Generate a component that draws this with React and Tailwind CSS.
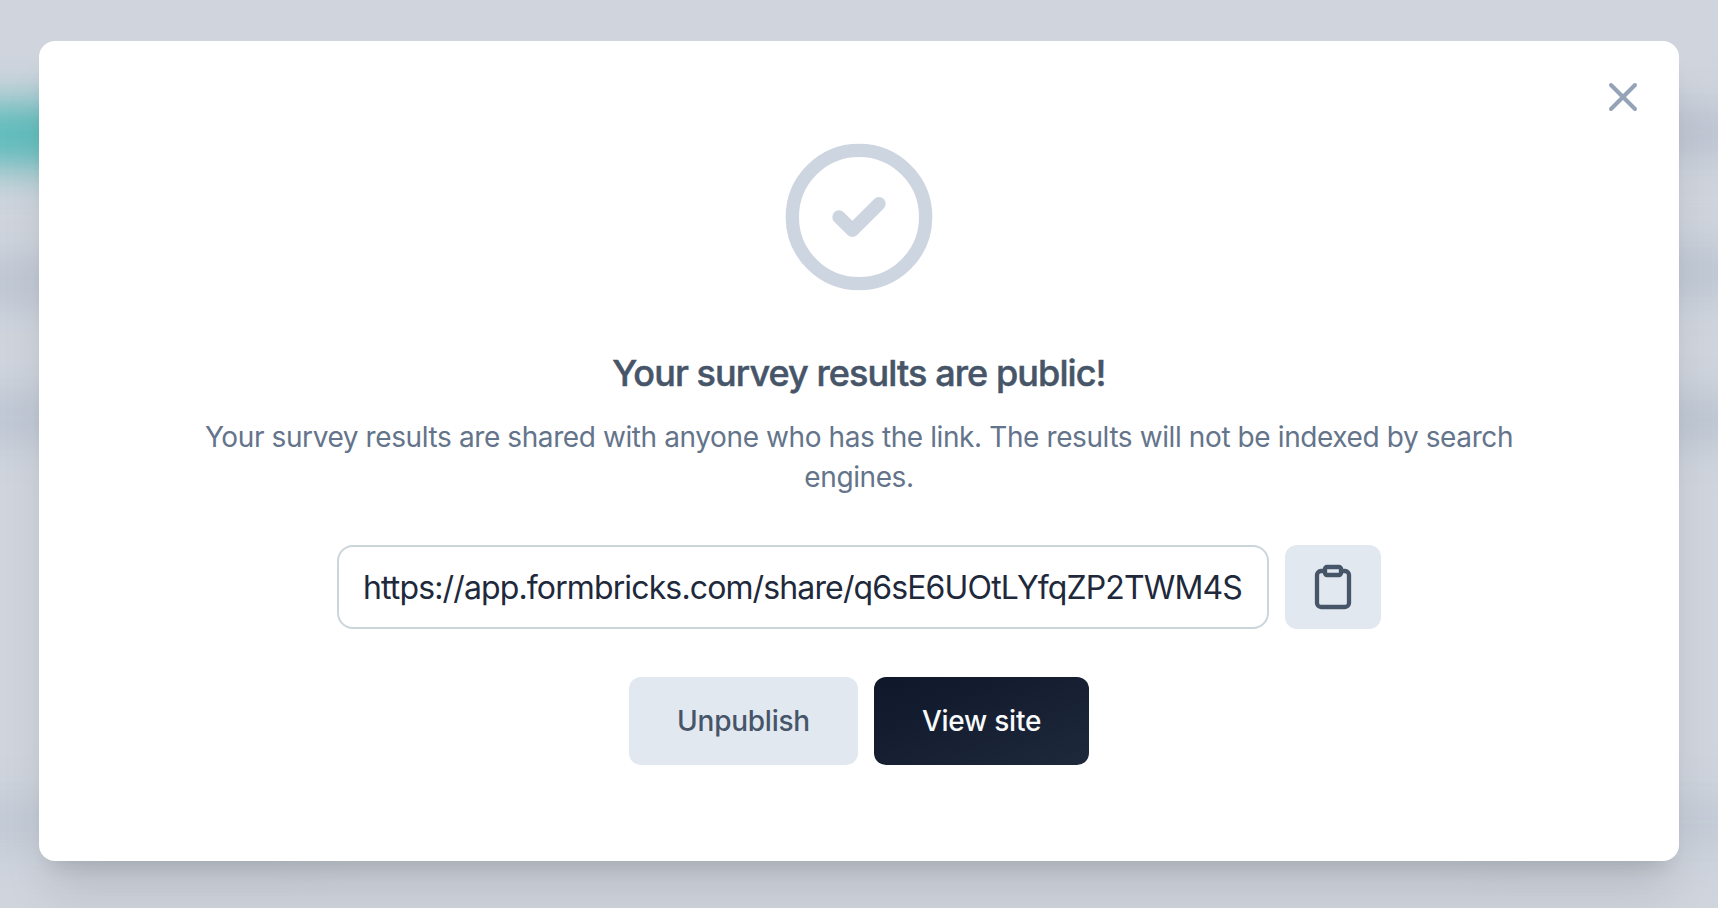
import { CircleCheck, Clipboard, X } from "lucide-react";

function Backdrop() {
  return (
    <div className="absolute inset-0 bg-[#cfd4dd]">
      <div className="absolute -left-20 top-[104px] h-[62px] w-[300px] bg-[#58bab9] blur-[20px]" />
      <div className="absolute -left-20 top-[262px] h-[40px] w-[220px] bg-[#bac3d0] blur-[20px]" />
      <div className="absolute -left-20 top-[396px] h-[44px] w-[220px] bg-[#bac4d1] blur-[20px]" />
      <div className="absolute -left-20 top-[800px] h-[44px] w-[400px] bg-[#bfc8d3] blur-[20px]" />
      <div className="absolute -right-20 top-[112px] h-[40px] w-[220px] bg-[#b8c1ce] blur-[20px]" />
      <div className="absolute -right-10 top-[252px] h-[40px] w-[160px] bg-[#b9c4d0] blur-[20px]" />
      <div className="absolute -right-20 top-[400px] h-[40px] w-[220px] bg-[#b8c3cf] blur-[20px]" />
      <div className="absolute -right-20 top-[800px] h-[44px] w-[320px] bg-[#c1c9d4] blur-[20px]" />
    </div>
  );
}

export default function App() {
  return (
    <main className="relative h-[908px] w-[1718px] overflow-hidden font-['Inter',sans-serif]">
      <Backdrop />
      <div className="relative px-[39px] pt-[41px]">
        <section className="relative flex h-[820px] flex-col items-center rounded-2xl bg-white pt-24 shadow-[0_40px_50px_-10px_rgba(0,0,0,0.1),0_16px_20px_-12px_rgba(0,0,0,0.12)]">
          <button className="absolute right-8 top-8 text-[#94a3b8]" aria-label="Close">
            <X size={48} />
          </button>
          <CircleCheck size={160} className="text-[#cdd5e1]" />
          <h2 className="mt-[48px] text-[36px] font-medium leading-[56px] tracking-[-0.91px] text-[#475569] [-webkit-text-stroke:0.5px_#475569]">
            Your survey results are public!
          </h2>
          <p className="mt-[16px] w-[1360px] text-center text-[28px] leading-[40px] tracking-[-0.4px] text-[#64748b]">
            Your survey results are shared with anyone who has the link. The results will not be indexed by search
            engines.
          </p>
          <div className="mt-[48px] flex gap-4">
            <div className="flex h-[84px] w-[932px] items-center whitespace-nowrap rounded-2xl border-2 border-[#cbd5da] px-6 pt-[2px] text-[32px] tracking-[-0.87px] text-[#1e293b]">
              https://app.formbricks.com/share/q6sE6UOtLYfqZP2TWM4S
            </div>
            <button className="flex h-[84px] w-24 items-center justify-center rounded-xl bg-[#e2e8f0] text-[#475569]" aria-label="Copy link">
              <Clipboard size={48} strokeWidth={2.15} />
            </button>
          </div>
          <div className="mt-12 flex gap-4 text-[28px] font-medium tracking-[-0.25px]">
            <button className="h-[88px] w-[229px] rounded-xl bg-[#e2e8f0] text-[#475569]">Unpublish</button>
            <button className="h-[88px] w-[215px] rounded-xl bg-linear-to-br from-[#0f172a] to-[#1e293b] text-[#f8fafc]">View site</button>
          </div>
        </section>
      </div>
    </main>
  );
}
